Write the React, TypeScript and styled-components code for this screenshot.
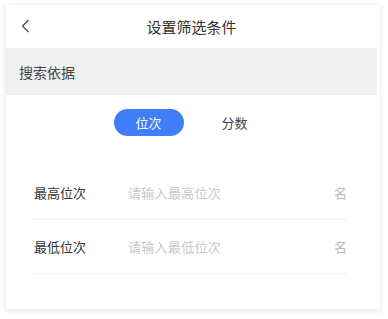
import React, { useState } from "react";
import styled, { createGlobalStyle } from "styled-components";

const GlobalStyle = createGlobalStyle`
  body {
    margin: 0;
    background: #ffffff;
    font-family: "Noto Sans CJK SC", "Noto Sans", sans-serif;
  }
`;

const Page = styled.div`
  padding: 5px 8px 10px 6px;
`;

const Card = styled.div`
  width: 374px;
  height: 304px;
  box-sizing: border-box;
  padding-right: 3px;
  background: #ffffff;
  box-shadow: 0 1px 6px rgba(0, 0, 0, 0.12);
  display: flex;
  flex-direction: column;
`;

const Header = styled.div`
  height: 43px;
  display: flex;
  align-items: center;
  justify-content: center;
  position: relative;
  font-size: 15px;
  color: #333333;
`;

const BackButton = styled.div`
  position: absolute;
  left: 15px;
  top: 14px;
  width: 10px;
  height: 14px;
  display: flex;
`;

const Section = styled.div`
  height: 47px;
  background: #f0f0f0;
  display: flex;
  align-items: center;
  padding-left: 13px;
  font-size: 14px;
  color: #444444;
`;

const Toggle = styled.div`
  display: flex;
  justify-content: center;
  gap: 16px;
  margin-top: 14px;
`;

const Option = styled.div<{ $active: boolean }>`
  width: 70px;
  height: 27px;
  border-radius: 14px;
  display: flex;
  align-items: center;
  justify-content: center;
  font-size: 13px;
  color: ${(p) => (p.$active ? "#ffffff" : "#444444")};
  background: ${(p) => (p.$active ? "#3f7ef6" : "transparent")};
  cursor: pointer;
`;

const Form = styled.div`
  margin: 30px 30px 0 26px;
`;

const Row = styled.div`
  height: 53px;
  display: flex;
  align-items: center;
  border-bottom: 1px solid #f3f3f3;
  padding-left: 2px;
`;

const Label = styled.div`
  width: 94px;
  font-size: 13px;
  color: #333333;
`;

const Input = styled.div`
  flex: 1;
  font-size: 13px;
  letter-spacing: 0.3px;
  color: #c8c8c8;
`;

const Unit = styled.div`
  font-size: 13px;
  color: #bbbbbb;
`;

const fields = [
  { label: "最高位次", placeholder: "请输入最高位次" },
  { label: "最低位次", placeholder: "请输入最低位次" },
];

export default function App() {
  const [mode, setMode] = useState("位次");
  return (
    <Page>
      <GlobalStyle />
      <Card>
        <Header>
          <BackButton>
            <svg width="10" height="14" viewBox="0 0 10 14">
              <polyline
                points="7.5,1 1.5,7 7.5,13"
                fill="none"
                stroke="#444"
                strokeWidth="1.2"
              />
            </svg>
          </BackButton>
          设置筛选条件
        </Header>
        <Section>搜索依据</Section>
        <Toggle>
          {["位次", "分数"].map((m) => (
            <Option key={m} $active={mode === m} onClick={() => setMode(m)}>
              {m}
            </Option>
          ))}
        </Toggle>
        <Form>
          {fields.map((f) => (
            <Row key={f.label}>
              <Label>{f.label}</Label>
              <Input>{f.placeholder}</Input>
              <Unit>名</Unit>
            </Row>
          ))}
        </Form>
      </Card>
    </Page>
  );
}
